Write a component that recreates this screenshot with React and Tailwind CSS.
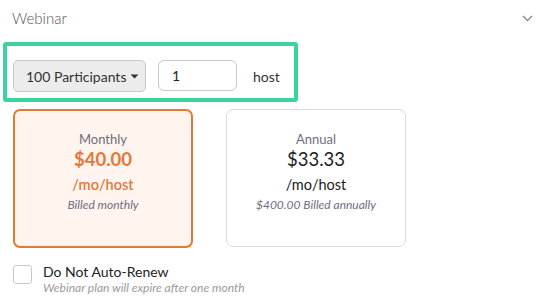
import React from "react";

export default function App() {
  return (
    <div className="w-[543px] h-[305px] bg-white overflow-hidden" style={{ fontFamily: "Lato, 'Noto Sans', sans-serif" }}>
      <div className="h-[36px] flex items-center justify-between pl-[12px] pr-[10px]">
        <span className="text-[15px] font-light text-[#555] leading-none">Webinar</span>
        <svg width="11" height="7" viewBox="0 0 11 7" className="mt-[0px]">
          <path d="M1 1 L5.5 5.5 L10 1" fill="none" stroke="#8a8a8a" strokeWidth="1.3" />
        </svg>
      </div>
      <div className="ml-[3px] mt-[6px] w-[295px] h-[60px] border-[4px] border-[#3ad49f] rounded-[3px] flex items-start pt-[14px] pl-[6px]">
        <div className="w-[133px] h-[32px] bg-[#ececec] border border-[#c9c9c9] rounded-[5px] flex items-center pl-[12px] text-[14px] text-[#333]">
          <span>100 Participants</span>
          <svg width="9" height="5" viewBox="0 0 9 5" className="ml-[4px]">
            <path d="M0.5 0.5 L8.5 0.5 L4.5 4.5 Z" fill="#333" />
          </svg>
        </div>
        <div className="ml-[12px] w-[79px] h-[31px] border border-[#c9c9c9] rounded-[6px] flex items-center pl-[13px] text-[14px] text-[#222]">1</div>
        <span className="ml-[16px] mt-[6px] text-[14px] text-[#333]">host</span>
      </div>
      <div className="flex ml-[13px] mt-[7px] gap-[33px]">
        <div className="w-[180px] h-[139px] border-2 border-[#e3783a] bg-[#fff4ee] rounded-[7px] flex flex-col items-center pt-[19px]">
          <div className="text-[13px] text-[#6e6e80] leading-[18px]">Monthly</div>
          <div className="text-[18.5px] font-bold text-[#e3783a] leading-[22px] mt-[0px]">$40.00</div>
          <div className="text-[14.5px] font-semibold text-[#e3783a] leading-[18px] mt-[6px]">/mo/host</div>
          <div className="text-[12px] italic text-[#6e6e80] leading-[16px] mt-[3px]">Billed monthly</div>
        </div>
        <div className="w-[180px] h-[138px] border border-[#d9d9de] rounded-[7px] flex flex-col items-center pt-[20px]">
          <div className="text-[13px] text-[#6e6e80] leading-[18px]">Annual</div>
          <div className="text-[18.5px] text-[#222] leading-[22px] mt-[0px]">$33.33</div>
          <div className="text-[14.5px] text-[#222] leading-[18px] mt-[6px]">/mo/host</div>
          <div className="text-[12px] italic text-[#6e6e80] leading-[16px] mt-[3px]">$400.00 Billed annually</div>
        </div>
      </div>
      <div className="flex ml-[13px] mt-[16px]">
        <div className="w-[19px] h-[19px] border border-[#c9c9c9] rounded-[3px] mt-[1px]"></div>
        <div className="ml-[11px] flex flex-col">
          <span className="text-[14px] text-[#222] leading-[16px]">Do Not Auto-Renew</span>
          <span className="text-[12px] italic text-[#9a9a9a] leading-[15px]">Webinar plan will expire after one month</span>
        </div>
      </div>
    </div>
  );
}
